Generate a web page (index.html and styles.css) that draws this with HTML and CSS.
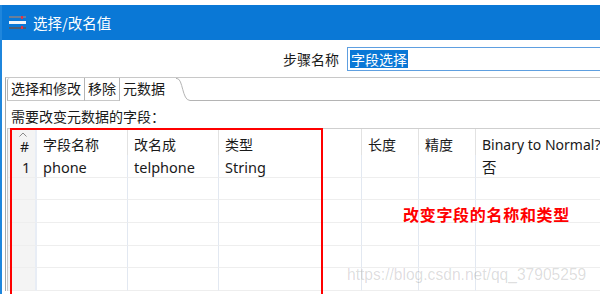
FILE: index.html
```html
<!DOCTYPE html>
<html>
<head>
<meta charset="utf-8">
<link rel="stylesheet" href="styles.css">
</head>
<body>
<div class="win">
  <div class="titlebar">
    <svg class="ticon" width="17" height="15" viewBox="0 0 17 15">
      <rect x="0" y="0" width="17" height="2" fill="#6a7f99"/>
      <rect x="12" y="0" width="2" height="3" fill="#e0304a"/>
      <rect x="0" y="5" width="17" height="3" fill="#f4f7fb"/>
      <rect x="0" y="11" width="17" height="2" fill="#4e5d70"/>
      <rect x="12" y="10" width="2" height="3" fill="#e0304a"/>
    </svg>
    <span class="title">选择/改名值</span>
  </div>
  <div class="steprow">
    <span class="lbl">步骤名称</span>
    <div class="input"><span class="sel">字段选择</span></div>
  </div>
  <div class="folder">
    <div class="tabs">
      <div class="tab">选择和修改</div>
      <div class="tab">移除</div>
      <div class="tab active">元数据</div>
      <svg class="curve" width="14" height="23" viewBox="0 0 14 23">
        <path d="M0 0 L1 0 C7 0 6 22.5 14 22.5 L14 23 L0 23 Z" fill="#ffffff"/>
        <path d="M0 0.5 L1 0.5 C7 0.5 6 22.5 14 22.5" fill="none" stroke="#b4b4b4" stroke-width="1"/>
      </svg>
      <div class="fill"></div>
    </div>
    <div class="panel">
      <div class="caption">需要改变元数据的字段：</div>
      <div class="grid">
        <div class="c h num">
          <svg class="sort" width="8" height="5" viewBox="0 0 8 5"><path d="M0.5 4.5 L4 1 L7.5 4.5" fill="none" stroke="#8a8a8a" stroke-width="1"/></svg>
          <span class="hash">#</span>
        </div>
        <div class="c h">字段名称</div>
        <div class="c h">改名成</div>
        <div class="c h">类型</div>
        <div class="c h">长度</div>
        <div class="c h">精度</div>
        <div class="c h last">Binary to Normal?</div>

        <div class="c num">1</div>
        <div class="c">phone</div>
        <div class="c">telphone</div>
        <div class="c">String</div>
        <div class="c"></div>
        <div class="c"></div>
        <div class="c last">否</div>

        <div class="c num"></div><div class="c"></div><div class="c"></div><div class="c"></div><div class="c"></div><div class="c"></div><div class="c last"></div>
        <div class="c num"></div><div class="c"></div><div class="c"></div><div class="c"></div><div class="c"></div><div class="c"></div><div class="c last"></div>
        <div class="c num"></div><div class="c"></div><div class="c"></div><div class="c"></div><div class="c"></div><div class="c"></div><div class="c last"></div>
        <div class="c num"></div><div class="c"></div><div class="c"></div><div class="c"></div><div class="c"></div><div class="c"></div><div class="c last"></div>
        <div class="c num"></div><div class="c"></div><div class="c"></div><div class="c"></div><div class="c"></div><div class="c"></div><div class="c last"></div>
      </div>
    </div>
  </div>
  <div class="redbox"></div>
  <div class="note">改变字段的名称和类型</div>
  <div class="wm">https://blog.csdn.net/qq_37905259</div>
</div>
</body>
</html>
```

FILE: styles.css
```css
html, body {
  margin: 0;
  padding: 0;
  background: #ffffff;
}
body {
  width: 600px;
  height: 294px;
  overflow: hidden;
  font-family: "Noto Sans CJK SC", "Noto Sans", sans-serif;
  font-size: 14px;
  color: #1a1a1a;
}
.win {
  position: relative;
  margin-top: 5px;
  border-left: 2px solid #1f86dc;
  height: 289px;
  width: 598px;
  overflow: hidden;
}
.titlebar {
  height: 35px;
  background: #0a78d6;
  display: flex;
  align-items: center;
  padding-left: 7px;
  gap: 7px;
}
.ticon {
  display: block;
  margin-top: 1px;
}
.title {
  color: #ffffff;
  font-size: 14.5px;
  line-height: 20px;
}
.steprow {
  height: 37px;
  display: flex;
  align-items: center;
  padding-left: 281px;
}
.lbl {
  line-height: 20px;
  width: 64px;
  flex: none;
}
.input {
  width: 400px;
  flex: none;
  height: 24px;
  box-sizing: border-box;
  border: 1px solid #5e9fe0;
  display: flex;
  align-items: center;
  padding-left: 2px;
}
.sel {
  background: #0a78d6;
  color: #ffffff;
  line-height: 18px;
  padding: 0 1px;
}
.folder {
  margin-left: 3px;
  border-left: 1px solid #a8a8a8;
  border-top: 1px solid #c8c8c8;
}
.tabs {
  display: flex;
  height: 23px;
  margin-left: 1px;
}
.tab {
  box-sizing: border-box;
  height: 23px;
  line-height: 21px;
  padding: 0 3px;
  border-right: 1px solid #b4b4b4;
  border-bottom: 1px solid #c8c8c8;
  background: #ffffff;
  color: #1a1a1a;
}
.tab:first-child {
  border-left: 1px solid #b4b4b4;
  border-top-left-radius: 3px;
}
.tab.active {
  border-bottom: none;
  border-right: none;
  padding-right: 0;
  width: 56px;
}
.curve {
  display: block;
  flex: none;
}
.fill {
  flex: 1;
  border-bottom: 1px solid #b4b4b4;
  box-sizing: border-box;
  height: 23px;
}
.panel {
  padding-left: 1px;
}
.caption {
  line-height: 21px;
  padding-top: 5px;
  padding-left: 4px;
}
.grid {
  display: grid;
  grid-template-columns: 29px 91px 91px 143px 57px 57px 200px;
  grid-template-rows: 26px 23px 22px 23px 23px 22px 23px;
  border-top: 1px solid #cfcfcf;
  border-left: 1px solid #c8c8c8;
  margin-top: 1px;
}
.c {
  box-sizing: border-box;
  border-right: 1px solid #e2e8f1;
  border-bottom: 1px solid #eeeeee;
  padding-left: 6px;
  padding-top: 2px;
  line-height: 20px;
  white-space: nowrap;
  font-family: "Noto Sans", "Noto Sans CJK SC", sans-serif;
  font-size: 14.5px;
}
.c.h {
  border-bottom: none;
  border-right-color: #e2e2e2;
  line-height: 26px;
  padding-top: 3px;
  font-size: 14px;
}
.c.num {
  background: #f4f4f4;
  padding-left: 14px;
  border-right: 2px solid #e8edf5;
}
.c.h.num {
  display: flex;
  flex-direction: column;
  padding-top: 3px;
  padding-left: 11px;
}
.sort {
  display: block;
  flex: none;
}
.hash {
  line-height: 16px;
  margin-top: 2px;
  padding-left: 1px;
}
.c.last {
  border-right: none;
  overflow: hidden;
}
.redbox {
  position: absolute;
  left: 8px;
  top: 123px;
  width: 313px;
  height: 200px;
  box-sizing: border-box;
  border: 2px solid #ff0000;
  border-bottom: none;
}
.note {
  position: absolute;
  left: 401px;
  top: 199px;
  color: #ff0000;
  font-weight: bold;
  font-size: 16px;
  line-height: 20px;
  letter-spacing: 0.7px;
}
.wm {
  position: absolute;
  left: 345px;
  top: 262px;
  font-family: "Liberation Sans", Arial, sans-serif;
  font-size: 15.6px;
  line-height: 16px;
  color: rgba(0, 0, 0, 0.14);
}
```
